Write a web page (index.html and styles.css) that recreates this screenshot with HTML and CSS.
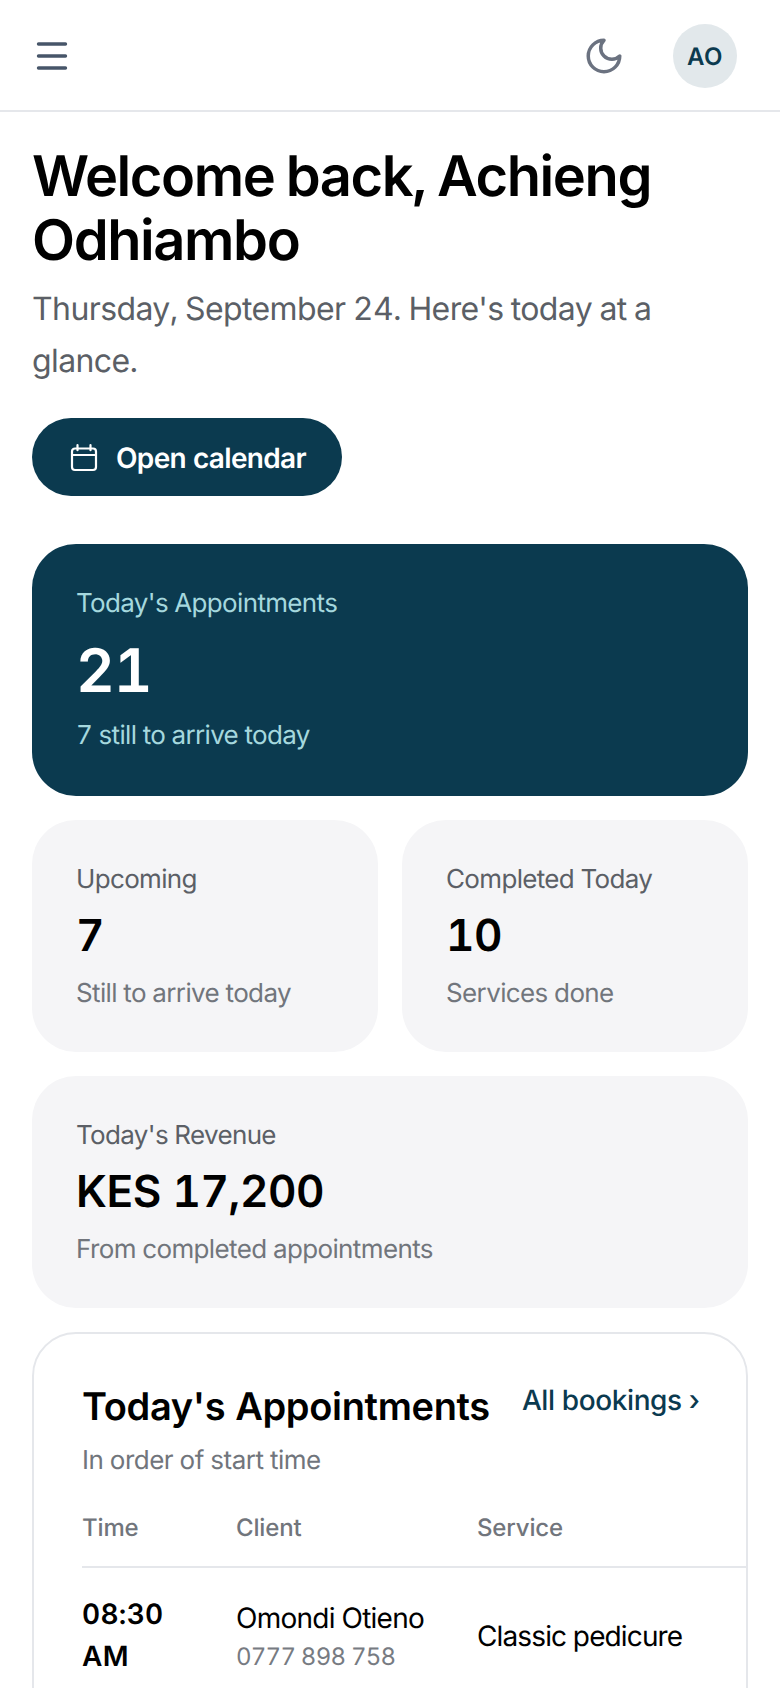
FILE: index.html
```html
<!DOCTYPE html>
<html lang="en">
<head>
<meta charset="utf-8">
<title>Dashboard</title>
<link rel="stylesheet" href="styles.css">
</head>
<body>
<header class="topbar">
  <svg class="menu-icon" viewBox="0 0 32 32" fill="none" stroke="#475569" stroke-width="3.4" stroke-linecap="round"><path d="M2.500 4h27M2.500 16h27M2.500 28h27"/></svg>
  <div class="topbar-right">
    <svg class="moon-icon" viewBox="0 0 24 24" fill="none" stroke="#6b7280" stroke-width="2" stroke-linecap="round" stroke-linejoin="round"><path d="M12 3a6 6 0 0 0 9 9 9 9 0 1 1-9-9Z"/></svg>
    <div class="avatar">AO</div>
  </div>
</header>
<main class="page">
  <h1 class="title">Welcome back, Achieng Odhiambo</h1>
  <p class="subtitle">Thursday, September 24. Here's today at a glance.</p>
  <a class="cta">
    <svg class="cal-icon" viewBox="0 0 28 28" fill="none" stroke="#fff" stroke-width="2.2" stroke-linecap="round" stroke-linejoin="round"><rect x="2" y="4.500" width="24" height="21.500" rx="3"/><path d="M2 11h24M7.500 1.200v5M20.500 1.200v5"/></svg>
    Open calendar
  </a>
  <section class="stats">
    <div class="stat stat-hero">
      <div class="hero-label">Today's Appointments</div>
      <div class="hero-value">21</div>
      <div class="hero-note">7 still to arrive today</div>
    </div>
    <div class="stat">
      <div class="stat-label">Upcoming</div>
      <div class="stat-value">7</div>
      <div class="stat-note">Still to arrive today</div>
    </div>
    <div class="stat">
      <div class="stat-label">Completed Today</div>
      <div class="stat-value">10</div>
      <div class="stat-note">Services done</div>
    </div>
    <div class="stat stat-wide">
      <div class="stat-label">Today's Revenue</div>
      <div class="stat-value">KES 17,200</div>
      <div class="stat-note">From completed appointments</div>
    </div>
  </section>
  <section class="panel">
    <div class="panel-head">
      <h2 class="panel-title">Today's Appointments</h2>
      <a class="panel-link">All bookings ›</a>
    </div>
    <p class="panel-sub">In order of start time</p>
    <div class="table-head">
      <span class="col-time">Time</span>
      <span class="col-client">Client</span>
      <span class="col-service">Service</span>
    </div>
    <div class="table-row">
      <div class="col-time time-cell">08:30 AM</div>
      <div class="col-client client-cell">
        <div class="client-name">Omondi Otieno</div>
        <div class="client-phone">0777 898 758</div>
      </div>
      <div class="col-service service-cell">Classic pedicure</div>
    </div>
  </section>
</main>
</body>
</html>
```
FILE: styles.css
```css
* { box-sizing: border-box; }
html, body { margin: 0; padding: 0; }
body {
  width: 780px;
  height: 1688px;
  overflow: hidden;
  background: #fff;
  color: #000;
  font-family: Inter, "Liberation Sans", sans-serif;
  text-rendering: geometricPrecision;
  font-variant-numeric: tabular-nums;
}
.topbar {
  height: 112px;
  border-bottom: 2px solid #e5e7eb;
  padding: 2px 43px 0 36px;
  display: flex;
  align-items: center;
  justify-content: space-between;
}
.menu-icon { width: 32px; height: 32px; display: block; }
.topbar-right { display: flex; align-items: center; gap: 48px; }
.moon-icon { width: 42px; height: 42px; display: block; }
.avatar {
  width: 64px;
  height: 64px;
  border-radius: 50%;
  background: #e2e8eb;
  color: #0b3a4f;
  font-size: 24px;
  font-weight: 600;
  letter-spacing: 0.5px;
  display: flex;
  align-items: center;
  justify-content: center;
}
.page { padding: 32px 32px 0; }
.title {
  margin: 0;
  font-size: 56px;
  line-height: 64px;
  font-weight: 600;
  letter-spacing: -1.4px;
  word-spacing: -2.5px;
}
.subtitle {
  margin: 11px 0 0;
  font-size: 32px;
  line-height: 52px;
  color: #5b5f66;
  letter-spacing: -0.6px;
  word-spacing: -0.7px;
}
.cta {
  margin-top: 31px;
  width: 310px;
  height: 78px;
  border-radius: 39px;
  background: #0b3a4f;
  color: #fff;
  font-size: 28px;
  font-weight: 600;
  letter-spacing: -0.66px;
  display: flex;
  align-items: center;
  gap: 18px;
  padding: 2px 0 0 38px;
}
.cal-icon { width: 28px; height: 28px; display: block; flex: none; overflow: visible; }
.stats {
  margin-top: 48px;
  display: grid;
  grid-template-columns: 1fr 1fr;
  gap: 24px;
}
.stat {
  background: #f5f5f7;
  border-radius: 44px;
  padding: 42px 44px;
  height: 232px;
}
.stat-hero {
  grid-column: 1 / -1;
  background: #0b3a4f;
  height: 252px;
  padding-top: 40px;
}
.stat-wide { grid-column: 1 / -1; }
.hero-label, .hero-note { color: #a5d8de; font-size: 26px; line-height: 40px; letter-spacing: -0.66px; }
.hero-value {
  color: #fff;
  font-size: 60px;
  line-height: 72px;
  font-weight: 600;
  margin: 11px 0 9px;
  letter-spacing: -1px;
}
.stat-label { color: #5b5f66; font-size: 26px; line-height: 36px; letter-spacing: -0.66px; }
.stat-value { font-size: 44px; line-height: 56px; font-weight: 600; margin: 9px 0 13px; letter-spacing: -0.4px; }
.stat-note { color: #71757c; font-size: 26px; line-height: 36px; letter-spacing: -0.62px; }
.panel {
  margin-top: 24px;
  border: 2px solid #e5e7eb;
  border-radius: 44px;
  padding: 46px 0 0 48px;
  height: 400px;
}
.panel-head { display: flex; gap: 32px; padding-right: 51px; justify-content: space-between; }
.panel-title { margin: 0; font-size: 38px; line-height: 54px; font-weight: 600; white-space: nowrap; letter-spacing: -0.33px; }
.panel-link { color: #0b3a4f; font-size: 28px; line-height: 40px; font-weight: 500; white-space: nowrap; letter-spacing: -0.4px; }
.panel-sub { margin: 9px 0 0; color: #71757c; font-size: 26px; line-height: 36px; letter-spacing: -0.5px; }
.table-head {
  margin-top: 33px;
  display: flex;
  height: 56px;
  border-bottom: 2px solid #e5e7eb;
  color: #71757c;
  font-size: 24px;
  font-weight: 500;
  line-height: 32px;
  letter-spacing: -0.15px;
}
.col-time { width: 154px; flex: none; }
.col-client { width: 241px; flex: none; }
.col-service { flex: 1; }
.table-row { display: flex; align-items: center; padding-top: 25px; }
.time-cell { font-size: 28px; line-height: 42px; font-weight: 600; padding-right: 40px; letter-spacing: 0.3px; }
.client-cell { align-self: flex-start; padding-top: 5px; }
.client-name { font-size: 28px; line-height: 40px; letter-spacing: -0.75px; }
.client-phone { font-size: 24px; line-height: 38px; color: #777b82; letter-spacing: -0.77px; }
.service-cell { font-size: 28px; line-height: 40px; letter-spacing: -0.87px; padding-top: 2px; }
```
